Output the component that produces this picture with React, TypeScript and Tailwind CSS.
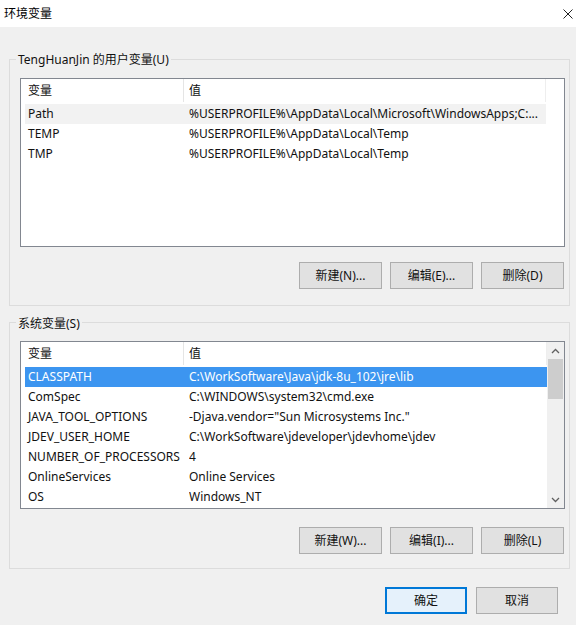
import React from "react";

const font = { fontFamily: '"Noto Sans", "Noto Sans CJK SC", sans-serif' };

type Row = [string, string];

function Btn({ label, primary, w }: { label: string; primary?: boolean; w: string }) {
  return (
    <div
      className={
        "h-[27px] flex items-center justify-center text-[12px] text-[#111] " +
        w +
        (primary ? " bg-[#e5f1fb] border-2 border-[#0078d7]" : " bg-[#e1e1e1] border border-[#adadad]")
      }
    >
      {label}
    </div>
  );
}

function ListView({
  rows,
  height,
  selected,
  selectedStyle,
  scrollbar,
}: {
  rows: Row[];
  height: string;
  selected: number;
  selectedStyle: "blue" | "gray";
  scrollbar?: boolean;
}) {
  return (
    <div className={"w-[545px] bg-white border border-[#828790] flex " + height}>
      <div className="flex-1 flex flex-col min-w-0">
        <div className="h-[23px] flex text-[12px] text-[#111] shrink-0">
          <div className="w-[163px] pl-[7px] flex items-center border-r border-[#e5e5e5]">变量</div>
          <div className="flex-1 pl-[5px] flex items-center border-r border-[#eeeeee]">值</div>
        </div>
        <div className="h-[2px]" />
        {rows.map((r, i) => {
          const sel = i === selected;
          const bg = sel
            ? selectedStyle === "blue"
              ? "bg-[#3c95f0] text-white"
              : "bg-[#f2f2f2] text-[#111]"
            : "text-[#111]";
          return (
            <div key={i} className={"h-[20px] ml-[4px] flex items-center text-[12px] whitespace-nowrap " + bg}>
              <div className="w-[164px] pl-[3px] overflow-hidden">{r[0]}</div>
              <div className="flex-1 overflow-hidden">{r[1]}</div>
            </div>
          );
        })}
      </div>
      {scrollbar ? (
        <div className="w-[17px] bg-[#f0f0f0] flex flex-col shrink-0">
          <div className="h-[17px] flex items-center justify-center">
            <svg width="9" height="6" viewBox="0 0 9 6">
              <path d="M1 5 L4.5 1.5 L8 5" fill="none" stroke="#606060" strokeWidth="1.3" />
            </svg>
          </div>
          <div className="h-[40px] mx-[1px] bg-[#cdcdcd]" />
          <div className="flex-1" />
          <div className="h-[17px] flex items-center justify-center">
            <svg width="9" height="6" viewBox="0 0 9 6">
              <path d="M1 1 L4.5 4.5 L8 1" fill="none" stroke="#606060" strokeWidth="1.3" />
            </svg>
          </div>
        </div>
      ) : (
        <div className="w-[18px] shrink-0" />
      )}
    </div>
  );
}

export default function App() {
  const userRows: Row[] = [
    ["Path", "%USERPROFILE%\\AppData\\Local\\Microsoft\\WindowsApps;C:..."],
    ["TEMP", "%USERPROFILE%\\AppData\\Local\\Temp"],
    ["TMP", "%USERPROFILE%\\AppData\\Local\\Temp"],
  ];
  const sysRows: Row[] = [
    ["CLASSPATH", "C:\\WorkSoftware\\Java\\jdk-8u_102\\jre\\lib"],
    ["ComSpec", "C:\\WINDOWS\\system32\\cmd.exe"],
    ["JAVA_TOOL_OPTIONS", '-Djava.vendor="Sun Microsystems Inc."'],
    ["JDEV_USER_HOME", "C:\\WorkSoftware\\jdeveloper\\jdevhome\\jdev"],
    ["NUMBER_OF_PROCESSORS", "4"],
    ["OnlineServices", "Online Services"],
    ["OS", "Windows_NT"],
  ];
  return (
    <div className="w-[576px] h-[625px] bg-[#f0f0f0] flex flex-col overflow-hidden" style={font}>
      <div className="h-[27px] bg-white flex items-center justify-between pl-[4px] pr-[3px] shrink-0">
        <span className="text-[12px] text-black">环境变量</span>
        <svg width="10" height="10" viewBox="0 0 10 10">
          <path d="M0.5 0.5 L9.5 9.5 M9.5 0.5 L0.5 9.5" stroke="#222" strokeWidth="1" />
        </svg>
      </div>

      <div className="relative mt-[32px] ml-[9px] w-[561px] border border-[#dcdcdc] pt-[18px] pl-[10px] pb-[16px]">
        <span className="absolute left-[6px] top-[-9px] bg-[#f0f0f0] px-[2px] text-[12px] text-[#111] leading-[18px]">
          TengHuanJin 的用户变量(U)
        </span>
        <ListView rows={userRows} height="h-[169px]" selected={0} selectedStyle="gray" />
        <div className="flex justify-end gap-[8px] mt-[15px] w-[544px]">
          <Btn label="新建(N)..." w="w-[83px]" />
          <Btn label="编辑(E)..." w="w-[83px]" />
          <Btn label="删除(D)" w="w-[83px]" />
        </div>
      </div>

      <div className="relative mt-[16px] ml-[9px] w-[561px] border border-[#dcdcdc] pt-[18px] pl-[10px] pb-[14px]">
        <span className="absolute left-[6px] top-[-8px] bg-[#f0f0f0] px-[2px] text-[12px] text-[#111] leading-[18px]">
          系统变量(S)
        </span>
        <ListView rows={sysRows} height="h-[168px]" selected={0} selectedStyle="blue" scrollbar />
        <div className="flex justify-end gap-[8px] mt-[18px] w-[544px]">
          <Btn label="新建(W)..." w="w-[83px]" />
          <Btn label="编辑(I)..." w="w-[83px]" />
          <Btn label="删除(L)" w="w-[83px]" />
        </div>
      </div>

      <div className="flex justify-end gap-[9px] mt-[18px] pr-[18px]">
        <Btn label="确定" primary w="w-[82px]" />
        <Btn label="取消" w="w-[82px]" />
      </div>
    </div>
  );
}
